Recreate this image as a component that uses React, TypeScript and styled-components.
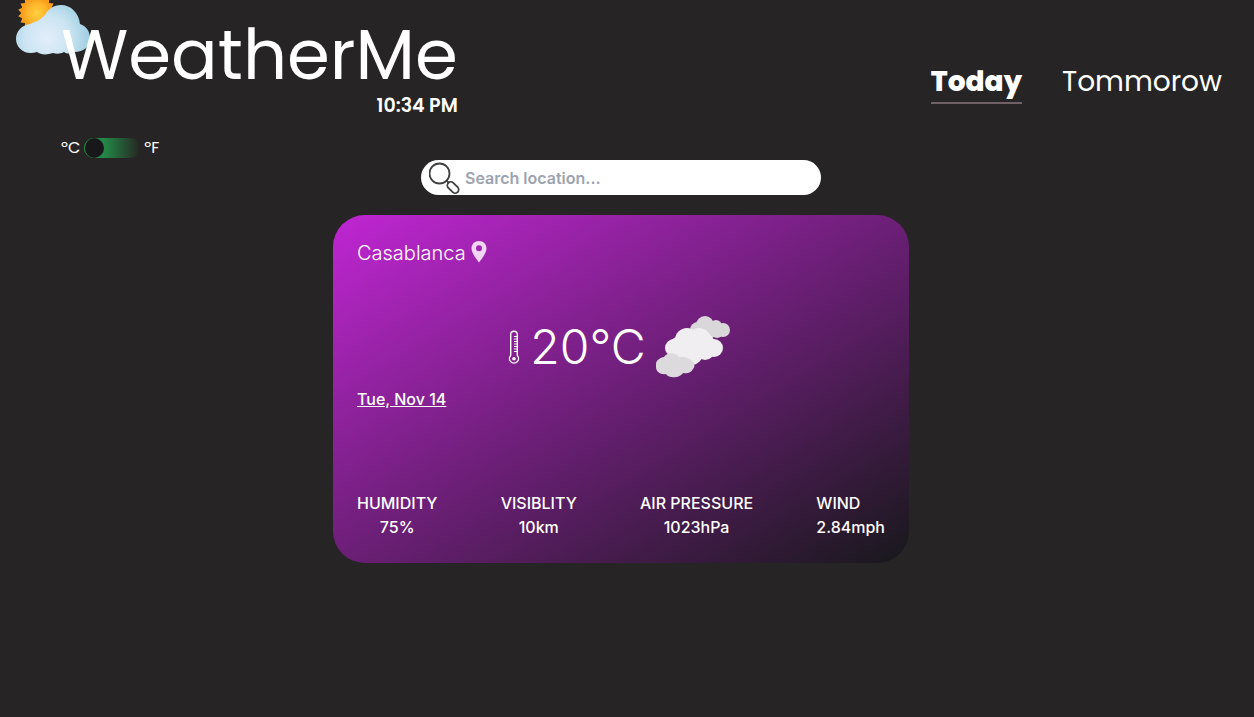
import React, { useState } from "react";
import styled, { createGlobalStyle, css } from "styled-components";

const display = css`
  font-family: Poppins, Inter, "Liberation Sans", sans-serif;
`;

const GlobalStyle = createGlobalStyle`
  *, *::before, *::after { box-sizing: border-box; }
  body {
    margin: 0;
    background: #262424;
    color: #fff;
    font-family: Inter, "Liberation Sans", sans-serif;
    font-size: 16px;
    line-height: 24px;
  }
  h1, h2, p, dl, dt, dd { margin: 0; font-weight: inherit; }
`;

const Page = styled.div`
  min-height: 100vh;
  padding: 18px 12px 0 0;
`;

const Header = styled.header`
  display: flex;
  justify-content: space-between;
  align-items: flex-start;
  padding: 0 20px 0 61px;
`;

const Brand = styled.div`
  position: relative;
  display: flex;
  flex-direction: column;
  align-items: flex-end;
  ${display}
`;

const Logo = styled.svg`
  position: absolute;
  top: -40px;
  left: -46px;
  width: 76px;
  height: 78px;
`;

const Title = styled.h1`
  position: relative;
  font-size: 69px;
  line-height: 74px;
`;

const Clock = styled.time`
  font-size: 19px;
  font-weight: 600;
  line-height: 28px;
`;

const Nav = styled.nav`
  display: flex;
  gap: 40px;
  padding-top: 44px;
`;

const NavLink = styled.a<{ $active?: boolean }>`
  ${display}
  color: #fff;
  font-size: 28px;
  line-height: 40px;
  text-decoration: none;
  font-weight: ${(p) => (p.$active ? 800 : 400)};
  border-bottom: 2px solid ${(p) => (p.$active ? "#6f6065" : "transparent")};
`;

const Units = styled.label`
  ${display}
  display: flex;
  align-items: center;
  gap: 4px;
  width: max-content;
  margin-top: 16px;
  padding-left: 61px;
`;

const Switch = styled.input`
  appearance: none;
  width: 56px;
  height: 20px;
  margin: 0;
  border-radius: 10px;
  background: linear-gradient(to right, #22a04e, #238344 40%, #262424);
  cursor: pointer;

  &::before {
    content: "";
    display: block;
    width: 20px;
    height: 20px;
    border-left: 1px solid #1f8a45;
    border-radius: 50%;
    background: #18181b;
  }

  &:checked::before {
    margin-left: auto;
  }
`;

const Main = styled.main`
  display: flex;
  flex-direction: column;
  align-items: center;
  gap: 20px;
`;

const Search = styled.label`
  display: flex;
  align-items: center;
  gap: 4px;
  width: 100%;
  max-width: 400px;
  height: 35px;
  padding: 0 8px;
  border-radius: 18px;
  background: #fff;
`;

const SearchInput = styled.input`
  flex: 1;
  min-width: 0;
  padding: 0;
  border: 0;
  outline: 0;
  background: transparent;
  color: #262424;
  font: 600 16px/24px Inter, "Liberation Sans", sans-serif;

  &::placeholder {
    color: #9ca3af;
    opacity: 1;
  }
`;

const Card = styled.section`
  display: flex;
  flex-direction: column;
  width: 100%;
  max-width: 576px;
  padding: 24px;
  border-radius: 32px;
  background: linear-gradient(to bottom right, #c026d3, #18181b);
`;

const Place = styled.h2`
  display: flex;
  align-items: center;
  gap: 5px;
  font-size: 20px;
  font-weight: 300;
  line-height: 28px;
`;

const Reading = styled.div`
  display: flex;
  align-items: center;
  justify-content: center;
  gap: 10px;
  margin-top: 48px;
  font-size: 48px;
  font-weight: 300;
  line-height: 64px;
`;

const Day = styled.p`
  margin-top: 8px;
  font-weight: 500;
  text-decoration: underline;
`;

const Stats = styled.dl`
  display: flex;
  justify-content: space-between;
  margin-top: 80px;
  font-weight: 500;
`;

const Stat = styled.div<{ $start?: boolean }>`
  text-align: ${(p) => (p.$start ? "left" : "center")};
`;

const stats = [
  { name: "HUMIDITY", value: "75%" },
  { name: "VISIBLITY", value: "10km" },
  { name: "AIR PRESSURE", value: "1023hPa" },
  { name: "WIND", value: "2.84mph", start: true },
];

type Puff = [number, number, number];

const Puffs = ({ of }: { of: Puff[] }) => (
  <>
    {of.map(([cx, cy, r]) => (
      <circle key={`${cx}-${cy}`} cx={cx} cy={cy} r={r} />
    ))}
  </>
);

const SunCloud = () => {
  const rays = Array.from({ length: 18 }, (_, i) => i * 20);
  return (
    <Logo viewBox="0 0 76 78" aria-hidden="true">
      <defs>
        <radialGradient id="sun" cx="50%" cy="50%" r="50%">
          <stop offset="0" stopColor="#ffd03e" />
          <stop offset="0.6" stopColor="#fdb52c" />
          <stop offset="1" stopColor="#f7991a" />
        </radialGradient>
        <radialGradient id="cloud" gradientUnits="userSpaceOnUse" cx="32" cy="60" r="44">
          <stop offset="0" stopColor="#e2eefa" />
          <stop offset="0.5" stopColor="#cde5f3" />
          <stop offset="1" stopColor="#9ccde0" />
        </radialGradient>
      </defs>
      {rays.map((r) => (
        <path key={r} d="M19 20 L22 16 L25 20 Z" fill="#f9a51f" transform={`rotate(${r} 22 35)`} />
      ))}
      <circle cx="22" cy="35" r="16" fill="url(#sun)" />
      <path
        d="M15 46 C18 44 21 44 24 42 C26 40 28 39 30 37 C33 31 39 27 46 27 C56 27 64 35 65 46 C71 48 75 53 75 60 C75 69 68 74 60 74 C56 76 52 76 49 74 C46 76 41 76 38 75 C32 77 26 77 22 74 C10 78 1 70 1 61 C1 53 7 47 15 46 Z"
        fill="url(#cloud)"
      />
    </Logo>
  );
};

const SearchIcon = () => (
  <svg width="32" height="32" viewBox="0 0 32 32" fill="none" stroke="#3f3f42" strokeWidth="1.800" aria-hidden="true">
    <circle cx="10.500" cy="11.500" r="10" />
    <path d="M17.500 18.500 L20 21" />
    <rect x="17.500" y="22" width="13" height="7" rx="3.400" transform="rotate(45 24 25.500)" />
  </svg>
);

const PinIcon = () => (
  <svg width="16" height="24" viewBox="0 0 16 24" fill="#f0d6f2" aria-hidden="true">
    <path
      fillRule="evenodd"
      d="M8 0 C3.600 0 0.500 3.200 0.500 7.300 C0.500 12 5 17.500 8 21.500 C11 17.500 15.500 12 15.500 7.300 C15.500 3.200 12.400 0 8 0 Z M8 4.200 A3 3 0 1 1 8 10.200 A3 3 0 1 1 8 4.200 Z"
    />
  </svg>
);

const Thermometer = () => (
  <svg width="12" height="34" viewBox="0 0 12 34" fill="none" stroke="#fff" strokeWidth="1.400" aria-hidden="true">
    <path d="M2.700 25.500 V4.500 A3.300 3.300 0 0 1 9.300 4.500 V25.500 A4.500 4.500 0 1 1 2.700 25.500 Z" />
    <circle cx="6" cy="28.800" r="1.800" fill="#fff" stroke="none" />
    <path d="M9 6.500 H6 M9 9 H6 M9 11.500 H6 M9 14 H6 M9 16.500 H6 M9 19 H6 M9 21.500 H6" strokeWidth="1" />
  </svg>
);

const Clouds = () => (
  <svg width="78" height="64" viewBox="0 0 78 64" aria-hidden="true">
    <g fill="#d9d7d9">
      <Puffs of={[[49, 10, 9], [60, 11, 6], [67, 15, 7], [61, 17, 6], [42, 15, 8], [54, 15, 8]]} />
    </g>
    <g fill="#f0eef0">
      <Puffs
        of={[
          [31, 25, 12],
          [18, 33, 9],
          [22, 30, 8],
          [58, 33, 9],
          [49, 35, 10],
          [43, 25, 12],
          [50, 27, 8],
          [35, 38, 12],
          [25, 36, 11],
        ]}
      />
    </g>
    <path
      d="M8 42 C11 37 20 37 23 42 C27 41 31 43 34 44 C38 46 40 51 37 54 C35 58 31 59 27 58 C24 63 13 64 10 59 C5 60 0 57 0 52 C-1 46 3 43 8 42 Z"
      fill="#dcdadc"
    />
  </svg>
);

export default function App() {
  const [fahrenheit, setFahrenheit] = useState(false);
  return (
    <>
      <GlobalStyle />
      <Page>
        <Header>
          <Brand>
            <SunCloud />
            <Title>WeatherMe</Title>
            <Clock>10:34 PM</Clock>
          </Brand>
          <Nav>
            <NavLink href="#today" $active>Today</NavLink>
            <NavLink href="#tomorrow">Tommorow</NavLink>
          </Nav>
        </Header>
        <Units>
          <span>ºC</span>
          <Switch
            type="checkbox"
            checked={fahrenheit}
            onChange={(e) => setFahrenheit(e.target.checked)}
          />
          <span>ºF</span>
        </Units>
        <Main>
          <Search>
            <SearchIcon />
            <SearchInput type="text" placeholder="Search location..." aria-label="Search location" />
          </Search>
          <Card>
            <Place>
              Casablanca
              <PinIcon />
            </Place>
            <Reading>
              <Thermometer />
              <span>20°C</span>
              <Clouds />
            </Reading>
            <Day>Tue, Nov 14</Day>
            <Stats>
              {stats.map((s) => (
                <Stat key={s.name} $start={s.start}>
                  <dt>{s.name}</dt>
                  <dd>{s.value}</dd>
                </Stat>
              ))}
            </Stats>
          </Card>
        </Main>
      </Page>
    </>
  );
}
